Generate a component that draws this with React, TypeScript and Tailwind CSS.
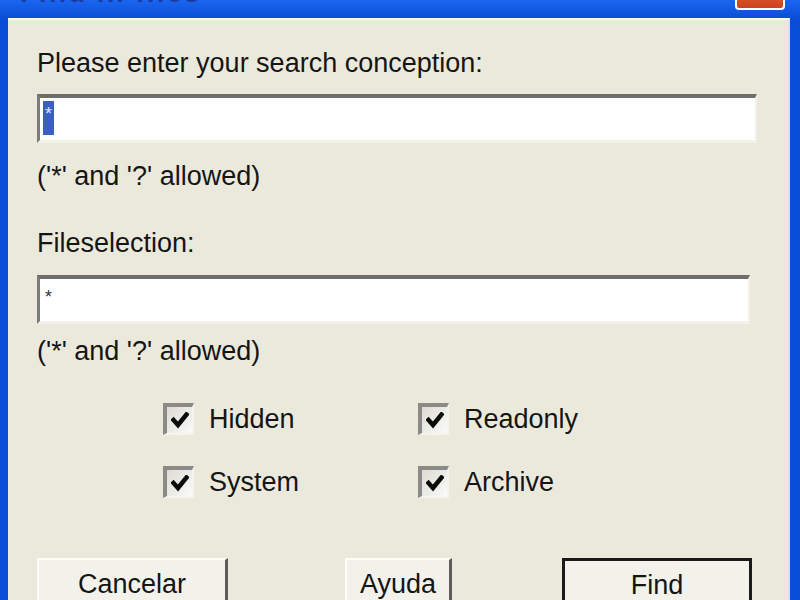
const font = { fontFamily: '"Liberation Sans", Arial, sans-serif' };

const CheckBox = ({ label }: { label: string }) => (
  <label className="flex items-center gap-[15px]">
    <span className="flex h-[32px] w-[31px] items-center justify-center border-t-[4px] border-l-[4px] border-r-2 border-b-2 border-t-[#8a8a86] border-l-[#8a8a86] border-r-[#f4f3ee] border-b-[#f4f3ee] bg-gradient-to-br from-[#dcdbd3] to-[#fbfbf8]">
      <svg width="18" height="17" viewBox="0 0 18 17">
        <path d="M2.5 8 L7 13 L15.5 2.5" fill="none" stroke="#0b0b0b" strokeWidth="4.5" strokeLinecap="square" />
      </svg>
    </span>
    <span className="text-[27px] leading-[32px] text-[#151515]">{label}</span>
  </label>
);

const Field = ({ selected }: { selected?: boolean }) => (
  <div className="h-[49px] border-t-[4px] border-l-[3px] border-r-2 border-b-[3px] border-t-[#6e6e6a] border-l-[#7c7c78] border-r-[#f2f1ea] border-b-[#f2f1ea] bg-white pl-[3px] pt-[3px]">
    {selected ? (
      <span className="flex h-[34px] w-[11px] items-start justify-center bg-[#3a5fbf] pt-[4px] text-[18px] leading-none text-[#d8e2ff]">
        *
      </span>
    ) : (
      <span className="block pl-[2px] pt-[6px] text-[18px] leading-none text-[#333]">*</span>
    )}
  </div>
);

const Button = ({ children, isDefault, className }: { children: string; isDefault?: boolean; className: string }) => (
  <button
    className={
      isDefault
        ? `${className} h-[60px] border-[3px] border-[#1a1a1a] bg-[#f2f1ea] pb-[6px] text-[27px] text-[#151515]`
        : `${className} h-[60px] border-t-2 border-l-2 border-r-[3px] border-b-[3px] border-t-[#fdfdfb] border-l-[#fdfdfb] border-r-[#5c5c58] border-b-[#5c5c58] bg-[#f2f1ea] pb-[6px] text-[27px] text-[#151515]`
    }
  >
    {children}
  </button>
);

export default function App() {
  return (
    <div className="flex h-[600px] w-[800px] flex-col overflow-hidden bg-[#0a4ed8]" style={font}>
      <div className="relative h-[18px] shrink-0 bg-gradient-to-b from-[#1a66f0] to-[#0b4fd6]">
        <span className="absolute left-[20px] top-[-21px] text-[28px] font-bold leading-none tracking-[2px] text-[#1c3aa0]">
          Find in files
        </span>
        <span className="absolute left-[735px] top-[-6px] h-[16px] w-[50px] rounded-b-[4px] border-2 border-t-0 border-white bg-gradient-to-b from-[#e2592c] to-[#c9431f]" />
      </div>
      <div className="flex flex-1 pl-[8px] pr-[10px]">
        <div className="flex flex-1 flex-col border-t-2 border-r-2 border-t-[#f7f6ef] border-r-[#dfe0e6] bg-[#ebe9dc] pl-[29px] pr-[31px] pt-[28px] text-[#151515]">
          <div className="text-[27px] leading-[30px]">Please enter your search conception:</div>
          <div className="mt-[16px]">
            <Field selected />
          </div>
          <div className="mt-[18px] text-[27px] leading-[30px]">('*' and '?' allowed)</div>
          <div className="mt-[37px] text-[27px] leading-[30px]">Fileselection:</div>
          <div className="mt-[17px] mr-[7px]">
            <Field />
          </div>
          <div className="mt-[12px] text-[27px] leading-[30px]">('*' and '?' allowed)</div>
          <div className="mt-[37px] grid grid-cols-[255px_1fr] gap-y-[31px] pl-[126px]">
            <CheckBox label="Hidden" />
            <CheckBox label="Readonly" />
            <CheckBox label="System" />
            <CheckBox label="Archive" />
          </div>
          <div className="mt-[60px] flex">
            <Button className="w-[191px]">Cancelar</Button>
            <Button className="ml-[117px] w-[107px]">Ayuda</Button>
            <Button isDefault className="ml-[110px] w-[190px]">Find</Button>
          </div>
        </div>
      </div>
    </div>
  );
}
